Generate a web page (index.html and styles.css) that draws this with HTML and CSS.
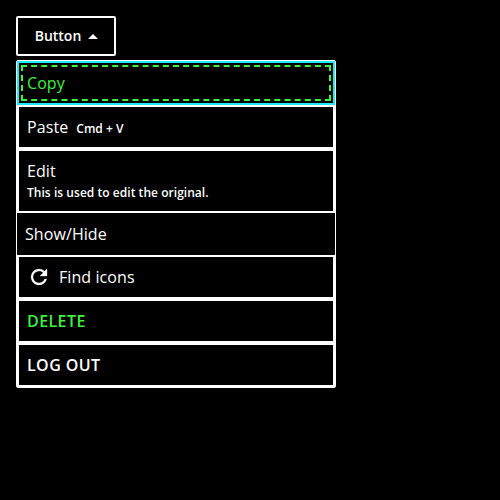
FILE: index.html
```html
<!DOCTYPE html>
<html lang="en">
<head>
<meta charset="utf-8">
<title>Menu button</title>
<link rel="stylesheet" href="styles.css">
</head>
<body>
<button class="trigger" type="button">
  <span>Button</span>
  <svg class="caret" width="10" height="5" viewBox="0 0 10 5" aria-hidden="true"><path d="M0 5 5 0l5 5z" fill="currentColor"/></svg>
</button>
<div class="menu" role="menu">
  <div class="item focused" role="menuitem">Copy</div>
  <div class="item" role="menuitem">Paste<span class="shortcut">Cmd + V</span></div>
  <div class="item stacked" role="menuitem">Edit<span class="description">This is used to edit the original.</span></div>
  <div class="item borderless" role="menuitem">Show/Hide</div>
  <div class="item" role="menuitem">
    <svg class="icon" width="24" height="24" viewBox="0 0 24 24" aria-hidden="true"><path d="M17.65 6.35A7.958 7.958 0 0 0 12 4a8 8 0 1 0 7.73 10h-2.08A6 6 0 1 1 12 6c1.66 0 3.14.69 4.22 1.78L13 11h7V4z" fill="currentColor" stroke="currentColor" stroke-width=".3"/></svg>
    Find icons
  </div>
  <div class="item action negative" role="menuitem">DELETE</div>
  <div class="item action" role="menuitem">LOG OUT</div>
</div>
</body>
</html>
```
FILE: styles.css
```css
* {
  box-sizing: border-box;
}

body {
  margin: 0;
  padding: 16px;
  background: #000;
  color: #fff;
  font: 16px/24px "Open Sans", sans-serif;
  letter-spacing: .08px;
}

.trigger {
  display: flex;
  align-items: center;
  justify-content: center;
  gap: 7px;
  width: 100px;
  height: 40px;
  padding: 0 0 0 1px;
  border: 2px solid #fff;
  border-radius: 2px;
  background: #000;
  color: #fff;
  font: 600 14px/20px "Open Sans", sans-serif;
}

.caret {
  display: block;
}

.menu {
  width: 320px;
  margin-top: 4px;
  border: 1px solid #fff;
  border-radius: 2px;
}

.item {
  position: relative;
  display: flex;
  align-items: center;
  height: 44px;
  padding: 0 8px;
  border: 2px solid #fff;
}

.focused {
  border-color: #1aebff;
  color: #3ff23f;
}

.focused::after {
  content: "";
  position: absolute;
  inset: 2px;
  border: 2px dashed #3ff23f;
}

.shortcut,
.description {
  font-size: 12px;
  font-weight: 600;
  line-height: 18px;
  letter-spacing: .04px;
}

.shortcut {
  margin: 4px 0 0 8px;
}

.stacked {
  flex-direction: column;
  align-items: flex-start;
  height: 64px;
  padding-top: 8px;
}

.description {
  margin-top: 1px;
}

.borderless {
  height: 42px;
  border: 0;
}

.icon {
  margin-right: 8px;
}

.action {
  font-weight: 600;
  letter-spacing: .42px;
}

.negative {
  color: #3ff23f;
}
```
